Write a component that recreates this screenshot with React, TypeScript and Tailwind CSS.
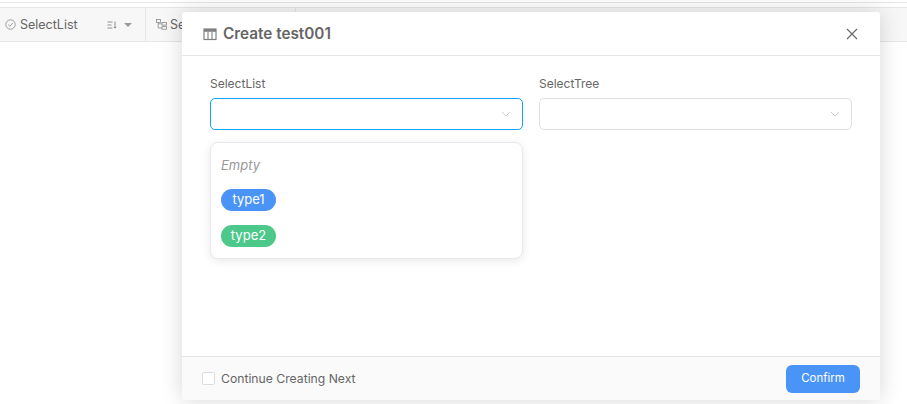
import React from 'react';

const Chevron: React.FC = () => (
    <svg width="12" height="12" viewBox="0 0 12 12" fill="none" className="text-[#c9cbd0]">
        <path d="M2 4 L6 8 L10 4" stroke="currentColor" strokeWidth="1" />
    </svg>
);

const TableIcon: React.FC = () => (
    <svg width="14" height="14" viewBox="0 0 14 14" fill="none" className="text-[#808080]">
        <rect x="1" y="2" width="12" height="10.5" stroke="currentColor" strokeWidth="1.2" />
        <rect x="1" y="2" width="12" height="2.8" fill="currentColor" />
        <path d="M5 5v7M9 5v7" stroke="currentColor" strokeWidth="1.1" />
    </svg>
);

const CheckCircleIcon: React.FC = () => (
    <svg width="11" height="11" viewBox="0 0 11 11" fill="none" className="text-[#8a8a8a]">
        <circle cx="5.5" cy="5.5" r="4.7" stroke="currentColor" strokeWidth="0.8" />
        <path d="M3.2 5.6 L4.9 7.2 L7.8 4" stroke="currentColor" strokeWidth="0.8" />
    </svg>
);

const TreeIcon: React.FC = () => (
    <svg width="11" height="11" viewBox="0 0 11 11" fill="none" className="text-[#8a8a8a]">
        <rect x="0.5" y="0.5" width="4" height="3" stroke="currentColor" strokeWidth="0.8" />
        <rect x="6" y="3.5" width="4.5" height="2.6" stroke="currentColor" strokeWidth="0.8" />
        <rect x="6" y="7.6" width="4.5" height="2.6" stroke="currentColor" strokeWidth="0.8" />
        <path d="M2.2 3.5V9H6M2.2 4.8H6" stroke="currentColor" strokeWidth="0.8" />
    </svg>
);

const SortIcon: React.FC = () => (
    <svg width="10" height="10" viewBox="0 0 10 10" fill="none" className="text-[#777]">
        <path d="M0.5 2h5M0.5 5h4M0.5 8h5M8 1.5v6.5M6.8 6.8 L8 8.2 L9.2 6.8" stroke="currentColor" strokeWidth="0.8" />
    </svg>
);

const SelectBox: React.FC<{ focused?: boolean }> = ({ focused }) => (
    <div className={`h-8 rounded-[5px] border bg-white flex items-center justify-end pr-[4px] ${focused ? 'border-[#0ea5f9]' : 'border-[#dfdfe3]'}`}>
        <div className="w-6 flex justify-center"><Chevron /></div>
    </div>
);

export default function App() {
    return (
        <div className="relative w-[907px] h-[404px] overflow-hidden bg-white font-['Inter',sans-serif]">
            {/* table behind the dialog */}
            <div className="h-[7px] bg-white">
                <div className="h-[3px] border-b border-[#e4e4e4]"></div>
            </div>
            <div className="h-[35px] flex bg-[#f7f7f7] border-y border-[#e6e6e6] text-[12.5px] text-[#666]">
                <div className="w-[146px] flex items-center pl-[5px] pr-[13px] border-r border-[#e6e6e6]">
                    <CheckCircleIcon />
                    <span className="ml-[4px] pt-px flex-1">SelectList</span>
                    <SortIcon />
                    <span className="ml-[7px] w-0 h-0 border-x-[4px] border-x-transparent border-t-[4px] border-t-[#999]"></span>
                </div>
                <div className="w-[150px] flex items-center pl-[10px] border-r border-[#e6e6e6]">
                    <TreeIcon />
                    <span className="ml-[3px] pt-px">SelectTree</span>
                </div>
            </div>

            {/* dialog */}
            <div className="absolute left-[182px] top-3 w-[698px] h-[388px] flex flex-col bg-white rounded-[3px] shadow-[0_0_22px_rgba(0,0,0,0.16)]">
                <div className="h-11 shrink-0 flex items-center justify-between pl-[21px] pr-[22px] border-b border-[#e5e5e5]">
                    <div className="flex items-center gap-[6px]">
                        <TableIcon />
                        <span className="pt-[2px] text-[15.3px] font-semibold text-[#666]">Create test001</span>
                    </div>
                    <svg width="12" height="12" viewBox="0 0 12 12" fill="none" className="text-[#666]">
                        <path d="M1 1 L11 11 M11 1 L1 11" stroke="currentColor" strokeWidth="1.1" />
                    </svg>
                </div>

                <div className="flex-1 grid grid-cols-2 gap-4 pl-7 pr-7 pt-[20px] content-start relative">
                    <div className="relative">
                        <div className="text-[12px] leading-[15px] text-[#666] mb-[7px]">SelectList</div>
                        <SelectBox focused />
                        <div className="absolute left-0 right-0 top-[66px] h-[117px] flex flex-col rounded-[8px] border border-[#e8e8ee] bg-white pl-[10px] pt-[13px] shadow-[0_2px_10px_rgba(0,0,0,0.09)]">
                            <div className="h-5 flex items-center italic text-[13px] text-[#999]">Empty</div>
                            <span className="mt-[13px] w-[55px] h-[22px] rounded-full bg-[#4a94f8] text-white text-[13px] flex items-center justify-center">type1</span>
                            <span className="mt-[14px] w-[55px] h-[22px] rounded-full bg-[#4cc98a] text-white text-[13px] flex items-center justify-center">type2</span>
                        </div>
                    </div>
                    <div>
                        <div className="text-[12px] leading-[15px] text-[#666] mb-[7px]">SelectTree</div>
                        <SelectBox />
                    </div>
                </div>

                <div className="h-[44px] shrink-0 flex items-center justify-between pl-5 pr-5 bg-[#fafafa] border-t border-[#e5e5e5] rounded-b-[3px]">
                    <label className="flex items-center gap-[6px] text-[12.2px] text-[#666]">
                        <span className="w-[13px] h-[13px] border border-[#dcdcdc] rounded-[2px] bg-white"></span>
                        <span className="pt-px">Continue Creating Next</span>
                    </label>
                    <button className="w-[74px] h-7 pt-px rounded-[6px] bg-[#4a94f8] text-white text-[11.5px]">Confirm</button>
                </div>
            </div>
        </div>
    );
}
